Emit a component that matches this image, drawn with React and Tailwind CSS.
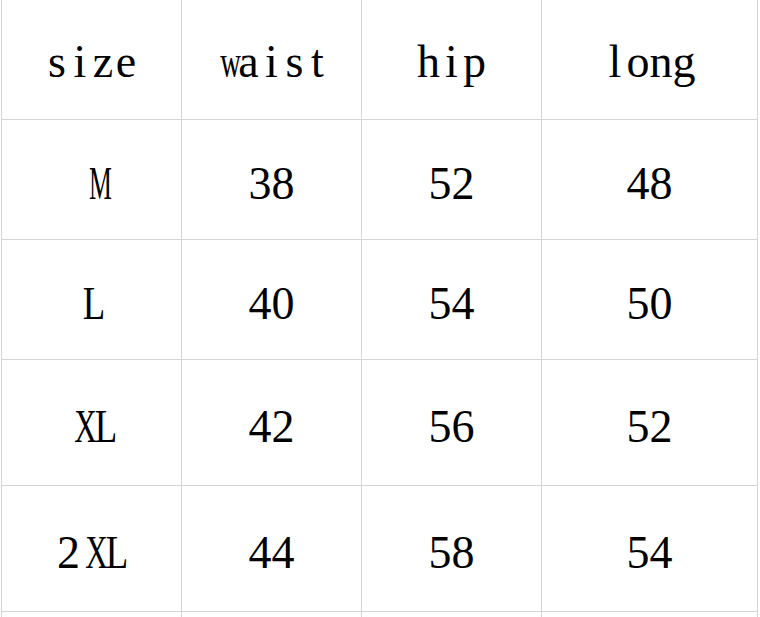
import React from 'react';

const header = ['size', 'waist', 'hip', 'long'];

const rows = [
  ['M', '38', '52', '48'],
  ['L', '40', '54', '50'],
  ['XL', '42', '56', '52'],
  ['2XL', '44', '58', '54'],
  ['', '', '', ''],
];

const rowHeights = ['h-[120px]', 'h-[120px]', 'h-[120px]', 'h-[126px]', 'h-[126px]', 'h-[126px]'];

// wide glyphs get squeezed into the same advance as the rest
const squeeze = {
  M: 'scale-x-[0.56]',
  X: 'scale-x-[0.68]',
  L: 'scale-x-[0.8]',
  W: 'scale-x-[0.56]',
  w: 'scale-x-[0.62]',
  m: 'scale-x-[0.62]',
};

// fixed advance per character, like the monospaced serif in the picture
const MonoText = ({ text }) => (
  <span className="flex">
    {text.split('').map((ch, i) => (
      <span key={i} className="inline-block w-[23px] text-center">
        <span className={`inline-block ${squeeze[ch] || ''}`}>{ch}</span>
      </span>
    ))}
  </span>
);

const Cell = ({ text, height, head }) => (
  <div
    className={`${height} flex items-center justify-center border-r border-b border-[#d4d4d4] ${head ? 'pt-1' : 'pt-2'}`}
  >
    <MonoText text={text} />
  </div>
);

const App = () => {
  const all = [header, ...rows];

  return (
    <div className="h-[617px] overflow-hidden bg-white">
      <div
        className="ml-px w-[757px] grid grid-cols-[180px_180px_180px_216px] border-l border-[#d4d4d4] text-black text-[46px] leading-none"
        style={{ fontFamily: '"Liberation Serif", "Times New Roman", serif' }}
      >
        {all.map((row, r) =>
          row.map((text, c) => (
            <Cell key={`${r}-${c}`} text={text} height={rowHeights[r]} head={r === 0} />
          ))
        )}
      </div>
    </div>
  );
};

export default App;
